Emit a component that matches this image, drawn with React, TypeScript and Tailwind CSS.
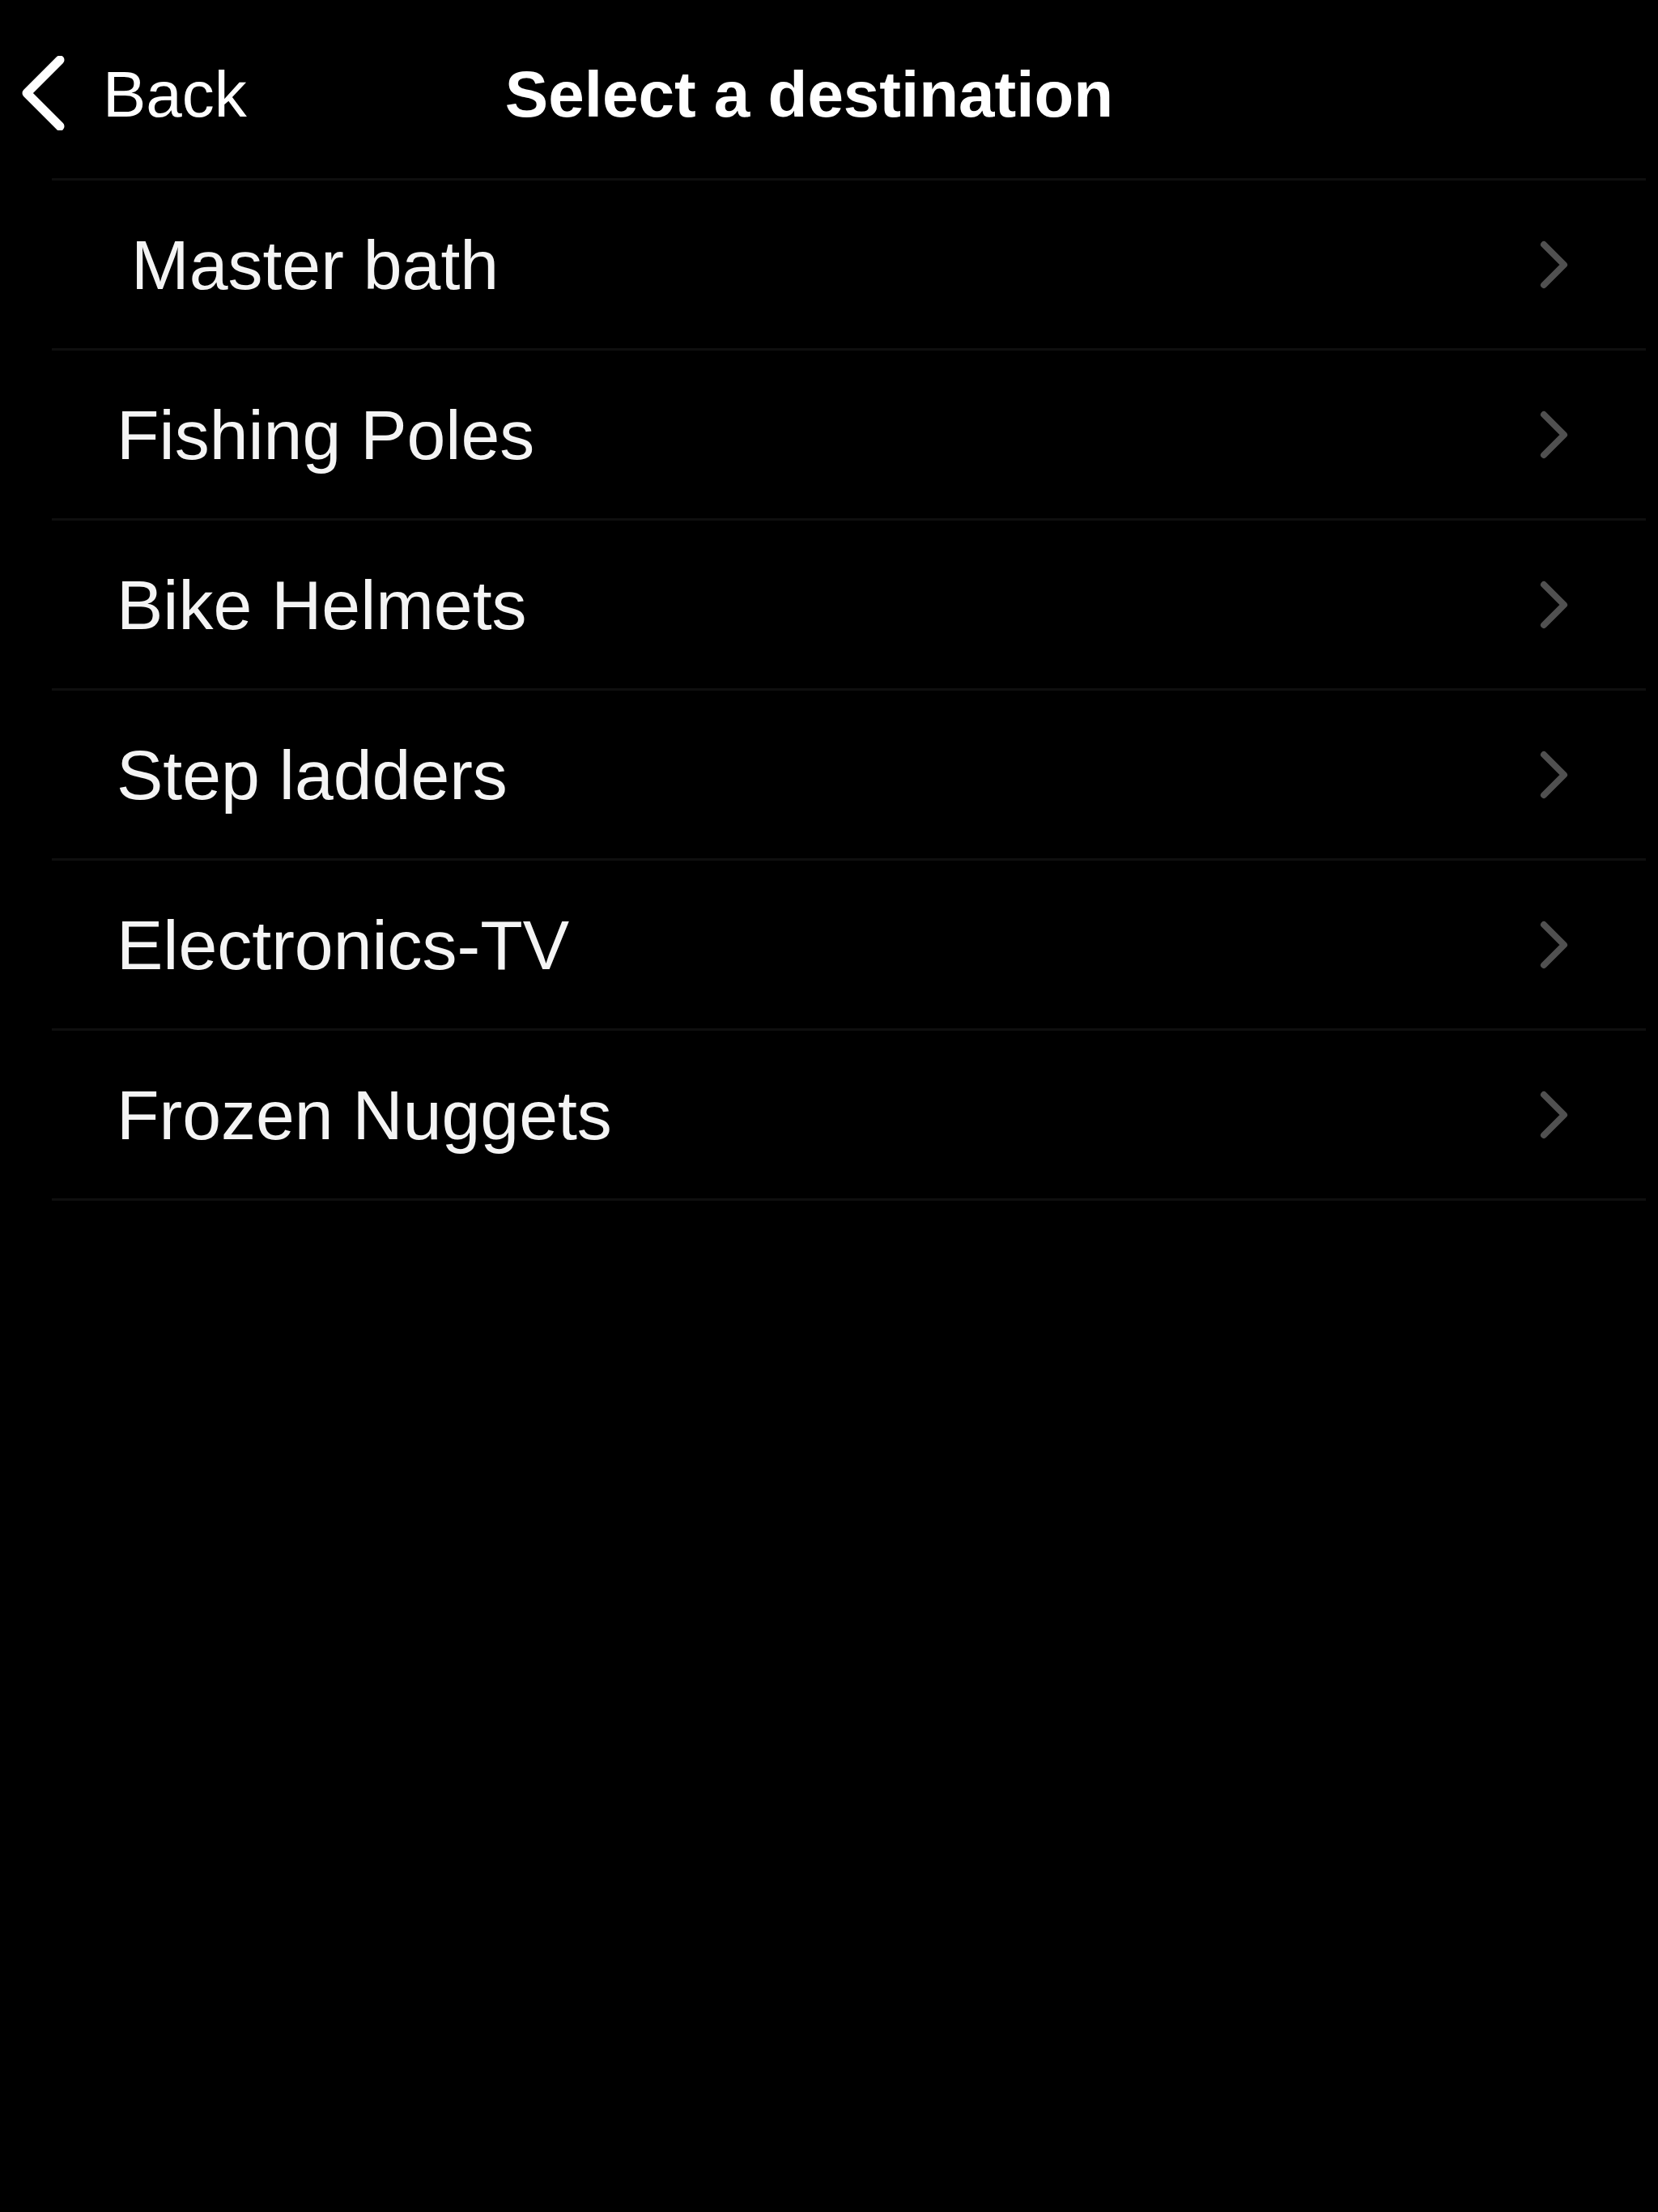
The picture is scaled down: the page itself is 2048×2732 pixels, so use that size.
import React from "react";

type Destination = {
  id: string;
  name: string;
  indent?: boolean;
};

const destinations: Destination[] = [
  { id: "master-bath", name: "Master bath", indent: true },
  { id: "fishing-poles", name: "Fishing Poles" },
  { id: "bike-helmets", name: "Bike Helmets" },
  { id: "step-ladders", name: "Step ladders" },
  { id: "electronics-tv", name: "Electronics-TV" },
  { id: "frozen-nuggets", name: "Frozen Nuggets" },
];

const BackChevron = () => (
  <svg width="58" height="92" viewBox="0 0 58 92" fill="none">
    <path
      d="M49 5 L8 46 L49 87"
      stroke="#ffffff"
      strokeWidth="11"
      strokeLinecap="round"
      strokeLinejoin="round"
    />
  </svg>
);

const RowChevron = () => (
  <svg width="40" height="60" viewBox="0 0 40 60" fill="none">
    <path
      d="M8 5 L33 30 L8 55"
      stroke="#505050"
      strokeWidth="8"
      strokeLinecap="round"
      strokeLinejoin="round"
    />
  </svg>
);

export default function App() {
  return (
    <div
      className="w-[2048px] h-[2732px] bg-black text-[#f4f4f4] overflow-hidden"
      style={{ fontFamily: '"Liberation Sans", Arial, sans-serif' }}
    >
      {/* nav bar */}
      <div className="h-[220px] flex items-center pl-[25px] pt-[10px]">
        <button className="flex items-center gap-[44px] text-[80px] leading-none text-white">
          <BackChevron />
          <span className="pt-[4px]">Back</span>
        </button>
        <h1 className="ml-[319px] text-[80px] font-bold leading-none text-white pt-[4px]">
          Select a destination
        </h1>
      </div>

      {/* destination list */}
      <ul className="ml-[64px] mr-[15px] border-t-[3px] border-[#0f0f0f]">
        {destinations.map((d) => (
          <li
            key={d.id}
            className="h-[210px] flex items-center justify-between border-b-[3px] border-[#0f0f0f] pl-[80px] pr-[94px]"
          >
            <span
              className={
                d.indent
                  ? "ml-[18px] text-[86px] leading-none"
                  : "text-[86px] leading-none"
              }
            >
              {d.name}
            </span>
            <RowChevron />
          </li>
        ))}
      </ul>
    </div>
  );
}
